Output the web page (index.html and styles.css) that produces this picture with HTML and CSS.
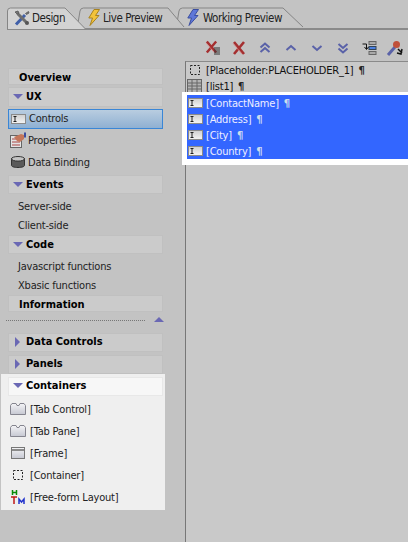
FILE: index.html
```html
<!DOCTYPE html>
<html lang="en">
<head>
<meta charset="utf-8">
<title>Design</title>
<link rel="stylesheet" href="styles.css">
</head>
<body>
<svg width="0" height="0" class="defs">
  <defs>
    <linearGradient id="g-field" x1="0" y1="0" x2="0" y2="1"><stop offset="0" stop-color="#cfcfcf"/><stop offset="1" stop-color="#f4f4f4"/></linearGradient>
    <linearGradient id="g-folder" x1="0" y1="0" x2="0" y2="1"><stop offset="0" stop-color="#f4f4f6"/><stop offset="1" stop-color="#c6c8d2"/></linearGradient>
    <symbol id="i-field" viewBox="0 0 15 10"><rect x=".5" y=".5" width="14" height="9" fill="url(#g-field)" stroke="#8a8a8a"/><path d="M2.500 2.500h3M2.500 7.500h3M4 2.500v5" stroke="#222" fill="none"/></symbol>
    <symbol id="i-x" viewBox="0 0 14 14"><path d="M2 1l10 12M12 1L2 13" stroke="#a52f30" stroke-width="2.600" fill="none"/><path d="M1 2.500l9 10.500" stroke="#d88" stroke-width=".7" fill="none"/></symbol>
    <symbol id="i-folder" viewBox="0 0 16 12"><path d="M.5 11.500V2.500L2 .5h4l1 2h2l1-2h4l1.500 2v9z" fill="url(#g-folder)" stroke="#85858f"/></symbol>
  </defs>
</svg>
<header class="tabs">
  <div class="tab tab-active">
    <svg class="tab-shape" width="79" height="29" viewBox="0 0 79 29"><path d="M.5 29V11q0-3 3-3H58L78.500 29" fill="#d3d3d3" stroke="#858585"/></svg>
    <svg class="tab-icon" width="16" height="16" viewBox="0 0 16 16"><path d="M2 14.500L11 5" stroke="#3f5fa8" stroke-width="3"/><path d="M3.500 3.500L13 13" stroke="#6e6e6e" stroke-width="3"/><path d="M1 2l2 2 2-1-1-2zM14.500 1.500l-3 2 1 1 2.500-1.500z" fill="#777" stroke="#555" stroke-width=".8"/><circle cx="13" cy="13" r="2" fill="#555"/></svg>
    <span>Design</span>
  </div>
  <div class="tab tab-mid">
    <svg class="tab-shape" width="108" height="29" viewBox="0 0 108 29"><path d="M.5 26L3 11q.5-3 3.500-3H91l16 19" fill="#c5c5c5" stroke="#858585"/></svg>
    <svg class="tab-icon" width="12" height="17" viewBox="0 0 12 17"><path d="M6 .5h5.500L7.500 6.500h3.500L2 16.500l2.500-7.500H.8z" fill="#f2c33a" stroke="#a8821e"/></svg>
    <span>Live Preview</span>
  </div>
  <div class="tab">
    <svg class="tab-shape" width="128" height="29" viewBox="0 0 128 29"><path d="M.5 26L3 11q.5-3 3.500-3H107l20 19" fill="#c5c5c5" stroke="#858585"/></svg>
    <svg class="tab-icon" width="12" height="17" viewBox="0 0 12 17"><path d="M6 .5h5.500L7.500 6.500h3.500L2 16.500l2.500-7.500H.8z" fill="#5f77d8" stroke="#3b4ea0"/></svg>
    <span>Working Preview</span>
  </div>
</header>
<div class="main">
  <aside class="side">
    <div class="head head-plain head-top">Overview</div>
    <div class="head head-ux"><i class="tri-down"></i>UX</div>
    <div class="item item-sel"><svg class="ic" width="15" height="10"><use href="#i-field"/></svg>Controls</div>
    <div class="item">
      <svg class="ic" width="16" height="16" viewBox="0 0 16 16"><rect x=".5" y="3.500" width="11" height="12" fill="#e4e4e4" stroke="#666"/><path d="M2 7h8M2 10h8M2 13h8" stroke="#a44"/><path d="M4 5l7-3 3 1v4l-4 3-3-1z" fill="#c4765a"/><path d="M15 .5v5" stroke="#3b4ea0" stroke-width="2"/></svg>Properties</div>
    <div class="item">
      <svg class="ic" width="16" height="12" viewBox="-1 0 16 12"><path d="M.5 2.500v7c0 1 2.500 2 6.500 2s6.500-1 6.500-2v-7z" fill="#5a5a5a" stroke="#333"/><ellipse cx="7" cy="2.800" rx="6.500" ry="2.300" fill="#c4c4c4" stroke="#333"/></svg>Data Binding</div>
    <div class="head head-events"><i class="tri-down"></i>Events</div>
    <div class="link link-first">Server-side</div>
    <div class="link">Client-side</div>
    <div class="head head-tight"><i class="tri-down"></i>Code</div>
    <div class="link link-first">Javascript functions</div>
    <div class="link">Xbasic functions</div>
    <div class="head head-plain head-tight">Information</div>
    <div class="sep"><i class="tri-up"></i></div>
    <div class="head head-tight head-up"><i class="tri-right"></i>Data Controls</div>
    <div class="head head-up"><i class="tri-right"></i>Panels</div>
    <div class="box">
      <div class="head head-light head-up"><i class="tri-down"></i>Containers</div>
      <div class="citem"><svg class="cic" width="16" height="12"><use href="#i-folder"/></svg>[Tab Control]</div>
      <div class="citem"><svg class="cic" width="16" height="12"><use href="#i-folder"/></svg>[Tab Pane]</div>
      <div class="citem"><svg class="cic" width="16" height="12" viewBox="0 0 16 12"><rect x="1.500" y=".5" width="13" height="11" fill="url(#g-folder)" stroke="#777"/><path d="M2 3h12" stroke="#8a8a8a" stroke-width="2"/></svg>[Frame]</div>
      <div class="citem"><svg class="cic" width="16" height="12" viewBox="0 0 16 12"><rect x="3.500" y="1.500" width="9" height="9" fill="none" stroke="#222" stroke-dasharray="2 1.500"/></svg>[Container]</div>
      <div class="citem"><svg class="cic" width="16" height="14" viewBox="0 0 16 14"><path d="M2.500 0v5M6.500 0v5M2.500 2.500h4" stroke="#0a8a0a" stroke-width="1.500"/><path d="M1 7h6M4 7v7" stroke="#c01818" stroke-width="1.500"/><path d="M9 14V9l2.500 3L14 9v5" stroke="#2233cc" stroke-width="1.500" fill="none"/></svg>[Free-form Layout]</div>
    </div>
  </aside>
  <section class="content">
    <div class="toolbar">
      <svg width="26" height="16" viewBox="0 0 16 16"><use href="#i-x" width="13" height="14"/><path d="M9 8h6M9 10h6M9 12h6M9 14h6" stroke="#333"/></svg>
      <svg width="26" height="14"><use href="#i-x" x="6" width="14" height="14"/></svg>
      <svg width="26" height="12" viewBox="0 0 12 12"><path d="M1.500 5.500L6 1.500l4.500 4M1.500 10L6 6l4.500 4" fill="none" stroke="#5a62a8" stroke-width="2"/></svg>
      <svg width="26" height="12" viewBox="0 0 12 12"><path d="M1.500 8L6 4l4.500 4" fill="none" stroke="#5a62a8" stroke-width="2"/></svg>
      <svg width="26" height="12" viewBox="0 0 12 12"><path d="M1.500 4L6 8l4.500-4" fill="none" stroke="#5a62a8" stroke-width="2"/></svg>
      <svg width="26" height="12" viewBox="0 0 12 12"><path d="M1.500 2L6 6l4.500-4M1.500 6.500L6 10.500l4.500-4" fill="none" stroke="#5a62a8" stroke-width="2"/></svg>
      <svg width="26" height="14" viewBox="0 0 15 14"><rect x="7.500" y=".5" width="7" height="3" fill="#aaa" stroke="#666"/><rect x="7.500" y="5.500" width="7" height="3" fill="#4a7fe0" stroke="#345"/><rect x="7.500" y="10.500" width="7" height="3" fill="#aaa" stroke="#666"/><path d="M1 3h4v5M3 6l2 2.500L7 6" fill="none" stroke="#111"/></svg>
      <svg width="26" height="16" viewBox="0 0 16 16"><path d="M1 15l7-8" stroke="#5a62a8" stroke-width="3"/><circle cx="9.500" cy="4.500" r="3.500" fill="#c0503a"/><path d="M11 9l4 4M15 9l-1 5-4-1" stroke="#111" fill="none" stroke-width="1.500"/></svg>
    </div>
    <div class="doc">
      <div class="row"><svg class="ric" width="15" height="10" viewBox="0 0 15 10"><rect x="3.500" y=".5" width="9" height="9" fill="none" stroke="#222" stroke-dasharray="2 1.500"/></svg>[Placeholder:PLACEHOLDER_1] <b class="pil">¶</b></div>
      <div class="row"><svg class="ric" width="15" height="14" viewBox="0 0 15 14"><rect x=".5" y=".5" width="14" height="13" fill="#b4b4b4" stroke="#666"/><path d="M.5 4h14M.5 7h14M.5 10h14M5 .5v13M10 .5v13" stroke="#666"/></svg>[list1] <b class="pil">¶</b></div>
      <div class="sel-wrap">
        <div class="sel">
          <div class="row"><svg class="ric" width="15" height="10"><use href="#i-field"/></svg>[ContactName] <b class="pil">¶</b></div>
          <div class="row"><svg class="ric" width="15" height="10"><use href="#i-field"/></svg>[Address] <b class="pil">¶</b></div>
          <div class="row"><svg class="ric" width="15" height="10"><use href="#i-field"/></svg>[City] <b class="pil">¶</b></div>
          <div class="row"><svg class="ric" width="15" height="10"><use href="#i-field"/></svg>[Country] <b class="pil">¶</b></div>
        </div>
      </div>
    </div>
  </section>
</div>
</body>
</html>
```

FILE: styles.css
```css
* { box-sizing: border-box; }
html, body { margin: 0; height: 100%; }
body {
  width: 408px;
  height: 542px;
  overflow: hidden;
  background: #c3c3c3;
  color: #111;
  font-family: "DejaVu Sans", "Noto Sans", sans-serif;
  font-stretch: condensed;
  font-size: 11px;
  letter-spacing: -0.2px;
  display: flex;
  flex-direction: column;
}
.defs { position: absolute; }
.tabs {
  height: 30px;
  display: flex;
  flex: none;
  margin-left: 7px;
  border-bottom: 2px solid #8a8a8a;
}
.tab {
  position: relative;
  display: flex;
  align-items: center;
  height: 28px;
  padding: 7px 0 0 11px;
  color: #222;
  font-size: 11.5px;
  letter-spacing: -0.45px;
  white-space: nowrap;
}
.tab span, .tab-icon { position: relative; }
.tab-shape { position: absolute; left: 0; top: 0; }
.tab-active { width: 70px; padding-left: 7px; z-index: 2; }
.tab-mid { width: 99px; z-index: 1; }
.tab-icon { margin-right: 4px; flex: none; }
.tab-active .tab-icon { margin-right: 2px; }
.tab-mid .tab-icon { margin-right: 3px; }
.main { display: flex; flex: 1; min-height: 0; }
.side {
  width: 185px;
  flex: none;
  padding: 38px 0 0 8px;
}
.head {
  width: 155px;
  height: 19px;
  margin-top: 3px;
  background: #cbcbcb;
  border: 1px solid #c0c0c0;
  display: flex;
  align-items: center;
  font-weight: 700;
  color: #000;
  letter-spacing: 0;
  padding-left: 4px;
  gap: 3px;
}
.head-top { margin-top: 0; }
.head-ux { margin-top: 2px; height: 20px; padding-bottom: 1px; }
.head-events { margin-top: 2px; }
.head-plain { padding-left: 10px; padding-top: 1px; height: 17px; }
.head-tight { margin-top: 0; }
.head-up { padding-bottom: 2px; }
.head-light { background: #f7f7f7; border-color: #e8e8e8; margin: 0 0 2px 7px; }
.tri-down, .tri-up, .tri-right { display: block; width: 0; height: 0; flex: none; }
.tri-down { border-left: 5px solid transparent; border-right: 5px solid transparent; border-top: 5px solid #6a68b4; }
.tri-up { border-left: 5px solid transparent; border-right: 5px solid transparent; border-bottom: 5px solid #6a68b4; }
.tri-right { border-top: 5px solid transparent; border-bottom: 5px solid transparent; border-left: 5px solid #6a68b4; margin-left: 2px; margin-right: 3px; }
.item {
  width: 155px;
  height: 22px;
  display: flex;
  align-items: center;
  gap: 2px;
  padding-left: 2px;
  color: #222;
}
.ic { flex: none; }
.item-sel { height: 20px; margin-top: 2px; padding-bottom: 1px; gap: 3px; background: linear-gradient(#b9cde0, #8fb0d2); border: 1px solid #3a86d6; }
.link { height: 19px; display: flex; align-items: center; padding-left: 10px; color: #222; }
.link-first { margin-top: 3px; }
.sep {
  position: relative;
  width: 139px;
  margin-left: -2px;
  height: 21px;
  background: repeating-linear-gradient(90deg, #777 0 1px, transparent 1px 2px) 0 8px / 100% 1px no-repeat;
}
.tri-up { position: absolute; left: 148px; top: 5px; }
.box {
  width: 164px;
  margin-left: -7px;
  padding-top: 3px;
  background: #efefef;
  height: 136px;
}
.citem { height: 22px; display: flex; align-items: center; padding-left: 9px; color: #222; gap: 4px; }
.cic { flex: none; }
.content { flex: 1; min-width: 0; display: flex; flex-direction: column; margin-top: -30px; }
.toolbar {
  height: 31px;
  margin-top: 30px;
  flex: none;
  display: flex;
  align-items: center;
  padding: 5px 0 0 15px;
}
.toolbar svg { flex: none; }
.doc { flex: 1; background: #c9c9c9; border-top: 1px solid #8a8a8a; border-left: 1px solid #777; }
.row { height: 16px; display: flex; align-items: center; padding-left: 1px; color: #111; white-space: pre; }
.ric { margin-right: 4px; flex: none; }
.pil { font-weight: 700; margin-left: 2px; color: #222; }
.sel-wrap { margin: -2px 0 0 -4px; padding: 3px 0 6px 5px; background: #fff; height: 73px; position: relative; }
.sel { background: #3366ff; }
.sel .row { color: #eef; }
.sel .ric { margin-right: 3px; }
.sel .pil { color: #cde; }
```
